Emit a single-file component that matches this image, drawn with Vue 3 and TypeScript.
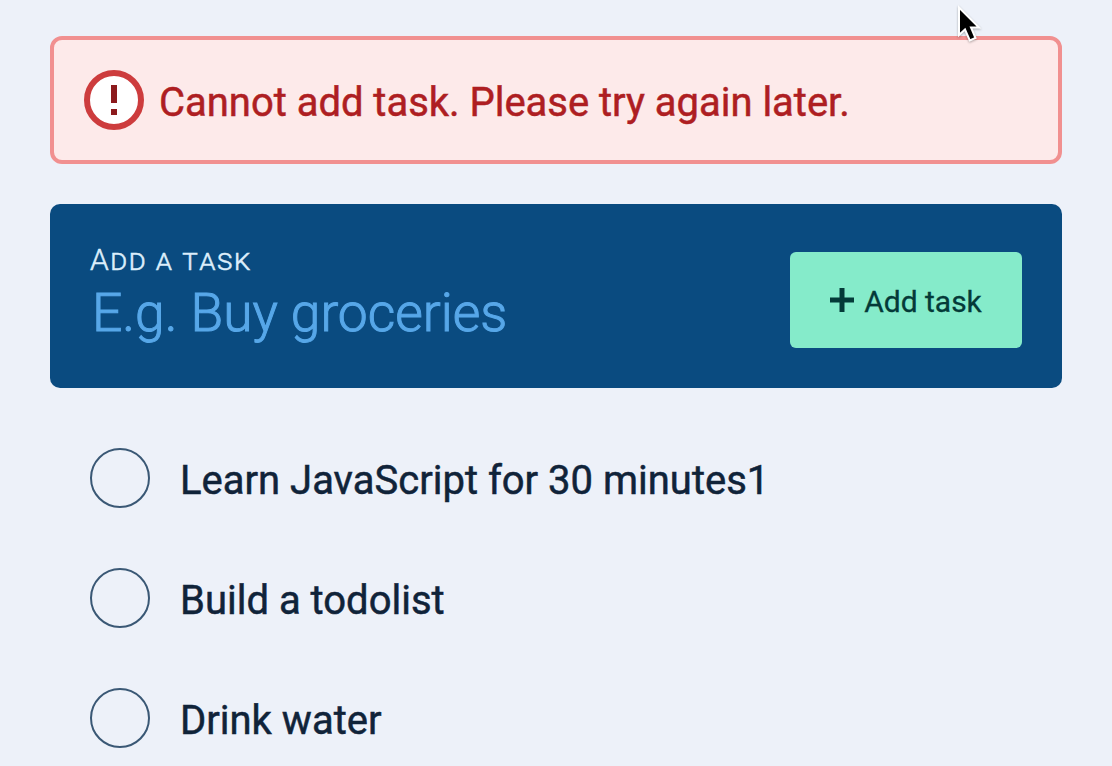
<script setup lang="ts">
const tasks: string[] = ['Learn JavaScript for 30 minutes1', 'Build a todolist', 'Drink water']
</script>

<template>
  <main class="page">
    <div class="alert" role="alert">
      <svg class="alert-icon" width="60" height="60" viewBox="0 0 60 60">
        <circle cx="30" cy="30" r="27" fill="#fff" stroke="#cd3c3d" stroke-width="6" />
        <path d="M27 15h6v18h-6zM27 39h6v6h-6z" fill="#8c1a1d" />
      </svg>
      <span class="alert-text">Cannot add task. Please try again later.</span>
    </div>
    <form class="add" @submit.prevent>
      <label class="field">
        <span class="label">Add a task</span>
        <span class="placeholder">E.g. Buy groceries</span>
      </label>
      <button class="btn" type="submit">
        <svg width="24" height="24" viewBox="0 0 24 24"><path d="M9.500 0h5v9.500H24v5h-9.500V24h-5v-9.500H0v-5h9.500z" fill="#043a38" /></svg>
        <span class="btn-text">Add task</span>
      </button>
    </form>
    <ul class="tasks">
      <li v-for="t in tasks" :key="t" class="task">
        <span class="check"></span><span class="name">{{ t }}</span>
      </li>
    </ul>
    <svg class="cursor" width="32" height="48" viewBox="0 0 32 48">
      <path d="M5 5.500V33l6-5.500 4.800 11 5.700-2.500L17 25.500H25z" fill="#000" stroke="#fff" stroke-width="2" />
    </svg>
  </main>
</template>

<style scoped>
.page { position: relative; box-sizing: border-box; height: 766px; overflow: hidden; padding: 36px 50px 0; background: #edf1f9; font-family: Roboto, sans-serif; }
.alert { box-sizing: border-box; height: 128px; border: 4px solid #f19090; border-radius: 12px; background: #fdeaea; display: flex; align-items: center; padding-left: 30px; gap: 15px; color: #ae1e22; font-size: 40px; }
.alert-text { white-space: nowrap; padding-top: 4px; letter-spacing: -0.02px; -webkit-text-stroke: 0.5px currentColor; }
.add { box-sizing: border-box; height: 184px; margin-top: 40px; padding: 8px 40px 0; border-radius: 10px; background: #0a4b80; display: flex; justify-content: space-between; align-items: center; }
.field { display: flex; flex-direction: column; align-self: flex-start; margin-top: 28px; }
.label { font-variant: small-caps; font-size: 30px; font-weight: 300; height: 40px; line-height: 40px; letter-spacing: 1.5px; color: #dceefb; -webkit-text-stroke: 0.5px currentColor; }
.placeholder { font-size: 53.333px; line-height: 64px; margin-top: 1px; font-weight: 300; color: #57a7e8; padding-left: 2px; -webkit-text-stroke: 1px currentColor; }
.btn { width: 232px; height: 96px; padding: 0; border: 0; border-radius: 6px; background: #85ebca; color: #043a38; font: 400 30px Roboto, sans-serif; display: flex; align-items: center; justify-content: center; gap: 10px; }
.btn-text { padding-top: 3px; -webkit-text-stroke: 0.3px currentColor; }
.tasks { list-style: none; margin: 30px 0 0; padding: 0 40px; }
.task { height: 120px; display: flex; align-items: center; gap: 30px; }
.check { box-sizing: border-box; width: 60px; height: 60px; border: 2px solid #3a5875; border-radius: 50%; }
.name { font-size: 40px; color: #102339; padding-top: 4px; white-space: nowrap; -webkit-text-stroke: 0.5px currentColor; }
.cursor { position: absolute; left: 954px; top: 2px; filter: drop-shadow(0 1px 1px rgba(0, 0, 0, 0.3)); }
</style>
<style>
body { background: #edf1f9; }
</style>
